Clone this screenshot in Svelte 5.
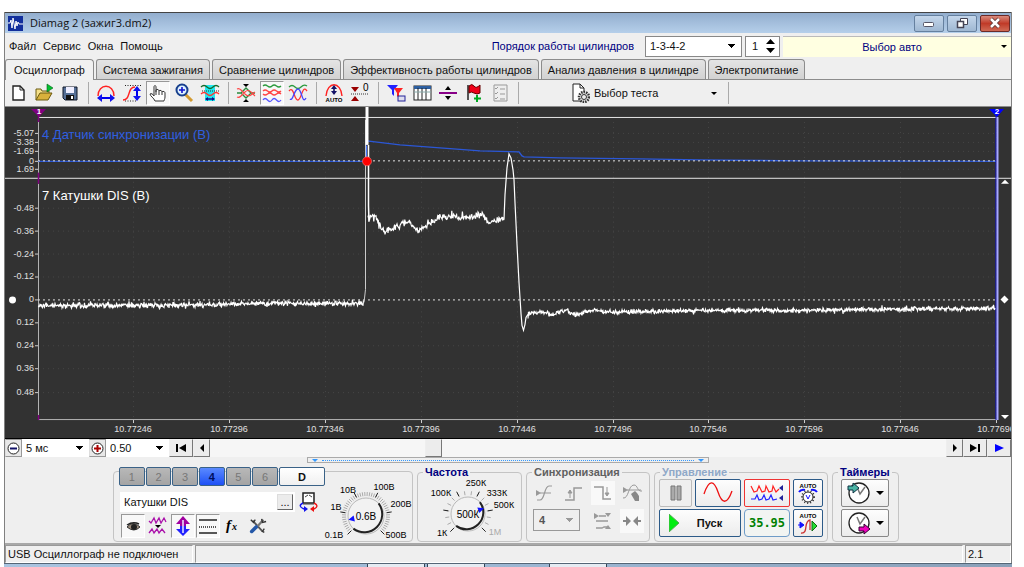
<script>
  // Oscilloscope main window: menu, mode tabs, toolbar, plot and the device panel.
  const tabs = ['Осциллограф', 'Система зажигания', 'Сравнение цилиндров', 'Эффективность работы цилиндров', 'Анализ давления в цилиндре', 'Электропитание'];
  let tab = $state(0);
  let channel = $state(4);
  let position = $state(299);
  let channelName = $state('Катушки DIS');

  const icons = {
    new: '<path d="M5 3h7l4 4v10H5z" fill="#fff" stroke="#222" stroke-width="1.4"/><path d="M12 3v4h4" fill="none" stroke="#222"/>',
    open: '<path d="M2 17V6h5l1 2h7v3" fill="#f5e08a" stroke="#6b5a10"/><path d="M2 17l4-7h12l-4 7z" fill="#d8b13c" stroke="#6b5a10"/><path d="M13 1l6 4-6 4z" fill="#00c030" stroke="#086018" stroke-width=".6"/>',
    save: '<path d="M3 4h14v13H5l-2-2z" fill="#556f96" stroke="#101828"/><path d="M6 4h8v6H6z" fill="#eef"/><path d="M6 12h8v5H6z" fill="#111"/><path d="M11 13h2v3h-2z" fill="#fff"/>',
    width: '<path d="M2 13C2 0 18 0 18 13" fill="none" stroke="#f22" stroke-width="1.4"/><path d="M5 15h10" stroke="#00e" stroke-width="2"/><path d="M1 15l5-4v8zM19 15l-5-4v8z" fill="#11e"/>',
    height: '<path d="M3 2.500h17M3 18h12" stroke="#222" stroke-dasharray="1 1.500"/><path d="M1 17c8 0 4-13 12-13" fill="none" stroke="#f22" stroke-width="1.400"/><path d="M15 6v9" stroke="#00e" stroke-width="2"/><path d="M15 3l4 5h-8zM15 18l4-5h-8z" fill="#11e"/>',
    hand: '<path d="M7 18c-1-3-5-5-5-7 1-1 3 0 4 2V4c0-2 2-2 2 0v5-2c0-1 3-1 3 1 0-1 3-1 3 1 0-1 3-1 3 1v4c0 2-1 3-1 4z" fill="#fff" stroke="#333"/><path d="M8 9v3M11 8v4M14 9v3" stroke="#333"/>',
    zoom: '<path d="M11 11l7 7" stroke="#d39a30" stroke-width="3"/><circle cx="8" cy="7" r="5.500" fill="#dff2ff" stroke="#173f8c" stroke-width="2"/><path d="M8 4v6M5 7h6" stroke="#11c" stroke-width="1.600"/>',
    cut: '<path d="M5 2h10v16H5z" fill="#1ee8f0"/><path d="M1 4q3-3 6 0t6 0 6 0" fill="none" stroke="#186a28" stroke-width="1.300"/><path d="M2 8h17" stroke="#333" stroke-dasharray="1 1"/><path d="M1 11q3-3 6 0t6 0 6 0" fill="none" stroke="#f33" stroke-width="1.300"/><path d="M6 16h8" stroke="#118" stroke-width="1.500"/><path d="M5 16l3-2v4zM15 16l-3-2v4z" fill="#118"/>',
    meet: '<path d="M7 1h6l-3 3zM7 19h6l-3-3z"/><path d="M1 10h4l5-5 5 5h4M5 10l5 5 5-5" fill="none" stroke="#2a8a3c" stroke-width="1.300"/><path d="M1 6q2-1 4 1l4 4q3 3 6 1l4-3M1 14q2 1 4-1l4-4q3-3 6 0l4 4" fill="none" stroke="#f44" stroke-width="1.100"/>',
    waves: '<g fill="none" stroke-width="1.300"><path d="M1 3q2-2 4.500 0t4.500 0 4.500 0 4.500 0" stroke="#2a9a3c"/><path d="M1 8q2-2 4.500 0t4.500 0 4.500 0 4.500 0M1 11q2 2 4.500 0t4.500 0 4.500 0 4.500 0" stroke="#f44"/><path d="M1 17q2-3 4.500 0t4.500 0 4.500 0 4.500 0" stroke="#55f"/></g>',
    cross: '<g fill="none" stroke-width="1.300"><path d="M1 4q3-3 6 0t6 0 6-1" stroke="#2a9a3c"/><path d="M1 8c5-6 5 10 9 9s4-16 9-9" stroke="#f33"/><path d="M2 16c3 3 4-10 8-10s4 16 8 9" stroke="#44f"/></g>',
    auto: '<path d="M2 13C3-2 17-2 18 13" fill="none" stroke="#f22" stroke-width="1.400"/><path d="M10 5v5" stroke="#116" stroke-width="1.600"/><path d="M10 2l3 4H7zM10 12l3-4H7z" fill="#116"/><text x="10" y="19" text-anchor="middle" font-size="6" font-weight="700">AUTO</text>',
    zero: '<path d="M1 11h18" stroke="#333" stroke-dasharray="1 1"/><path d="M5 9L1 4h8zM5 13l-4 5h8z" fill="#900"/><text x="13" y="8" font-size="10">0</text>',
    filter: '<path d="M1 2h11L8 7v6L6 11V7z" fill="#22f"/><path d="M8 5h9l-4 5v5l-2-2v-3z" fill="#f22"/><rect x="12" y="13" width="7" height="5" fill="#dde" stroke="#229"/>',
    table: '<rect x="2" y="3" width="17" height="14" fill="#fff" stroke="#222"/><path d="M2 3h17v3H2z" fill="#2d5fa0"/><path d="M6 5v12M10 5v12M14 5v12" stroke="#222"/><path d="M2 9h17" stroke="#8aa"/>',
    split: '<path d="M10 3l3 4H7zM10 17l3-4H7z"/><path d="M1 10h18" stroke="#808" stroke-width="2"/>',
    flag: '<path d="M4 2v15" stroke="#222" stroke-width="1.500"/><path d="M5 3q3-3 5 0t6-1v8q-3 2-6 0t-5 0z" fill="#f00018" stroke="#600"/><path d="M13 12v7M10 15.500h7" stroke="#0a2" stroke-width="2"/>',
    list: '<path d="M4 2h13v16H4z" fill="#eee" stroke="#999"/><path d="M5 5l1 1 2-2M5 10l1 1 2-2M5 15l1 1 2-2M10 6h5M10 11h5M10 16h5" fill="none" stroke="#999"/>',
    test: '<path d="M3 1h7l4 4v13H3z" fill="#fff" stroke="#222"/><path d="M10 1v4h4" fill="none" stroke="#222"/><circle cx="14" cy="14" r="5" fill="#ddd" stroke="#333" stroke-width="2.500" stroke-dasharray="1.500 1"/><circle cx="14" cy="14" r="2.500" fill="#eee" stroke="#333"/>',
    eye: '<path d="M4 11q6-7 13 0-6 6-13 0z" fill="#9a8a7a" stroke="#333"/><circle cx="11" cy="11" r="3" fill="#222"/><path d="M4 9q6-4 12-1" fill="none" stroke="#222" stroke-width="1.500"/>',
    squeeze: '<path d="M1 5l2 2 3-5 2 5 3-5 2 5 3-5 2 4M1 17l3-4 2 4 3-4 2 4 3-4 3 4" fill="none" stroke="#a1a" stroke-width="1.300"/><path d="M7 9h6l-3 3z"/>',
    updown: '<path d="M10 0l7 8h-4v3H7V8H3z" fill="#a000a0"/><path d="M10 20l7-7h-4v-3H7v3H3z" fill="#2222ff"/><path d="M10 4v13" stroke="#eef" stroke-width="1.500"/>',
    lines: '<path d="M1 4h18M1 17h18" stroke="#222" stroke-width="1.300"/><path d="M1 11h18" stroke="#222" stroke-dasharray="1 1" stroke-width="1.300"/>',
    fx: '<text x="3" y="14" font-family="Liberation Serif, serif" font-size="15" font-style="italic" font-weight="700">f</text><text x="9" y="14" font-family="Liberation Serif, serif" font-size="10" font-style="italic" font-weight="700">x</text>',
    tools: '<path d="M4 4l11 12" stroke="#555" stroke-width="2"/><path d="M16 3L8 12" stroke="#777" stroke-width="2.500"/><path d="M8 11l-5 5" stroke="#2458a8" stroke-width="4" stroke-linecap="round"/><path d="M2 3l3 3 2-3M17 13l-2 3 2 1M14 2l1 4 4-1" fill="none" stroke="#333" stroke-width="1.500"/>',
    swap: '<path d="M4 1h11v10H4z" fill="#fff" stroke="#222" stroke-width="1.500"/><path d="M6 5l3-2M10 3l3 2M4 12h11" stroke="#444"/><path d="M4 11q-6 3 1 6" fill="none" stroke="#11e" stroke-width="1.400"/><path d="M5 14l4 3-4 3z" fill="#11e"/><path d="M15 11q6 3 0 6" fill="none" stroke="#e11" stroke-width="1.400"/><path d="M15 14l-4 3 4 3z" fill="#e11"/>',
    trigA: '<path d="M1 7l5 3-5 3z" fill="#999"/><path d="M2 17h3c5 0 4-14 9-14h3M5 10h11" fill="none" stroke="#999" stroke-width="1.200"/>',
    trigUp: '<path d="M1 17h9V5h8" fill="none" stroke="#999" stroke-width="1.500"/><path d="M6 15V7M4 10l2-3 2 3z" fill="#999" stroke="#999"/>',
    trigDown: '<path d="M1 4h9v12h8" fill="none" stroke="#999" stroke-width="1.500"/><path d="M14 4v8M12 10l2 3 2-3z" fill="#999" stroke="#999"/>',
    trigHand: '<path d="M1 4l5 3-5 3z" fill="#999"/><path d="M1 15c6 1 5-13 11-13 4 0 3 7 8 6M5 7h14" fill="none" stroke="#999"/><path d="M9 11l4-3 2 2 2 3v5h-4z" fill="#888"/>',
    level: '<path d="M1 2l5 3-5 3z" fill="#999"/><path d="M6 5h7M3 10h12M3 17h6l2-1h5" stroke="#999" fill="none" stroke-width="1.300"/><path d="M12 2h6l-3 4zM12 18h6l-3-4z" fill="#999"/>',
    pinch: '<path d="M1 10h5M19 10h-5" stroke="#888" stroke-width="2"/><path d="M4 5l5 5-5 5zM16 5l-5 5 5 5z" fill="#888"/>',
  };

  const groups = [
    [['new', 'Новый'], ['open', 'Открыть'], ['save', 'Сохранить']],
    [['width', 'Масштаб по времени'], ['height', 'Масштаб по амплитуде'], ['hand', 'Перемещение', true], ['zoom', 'Лупа'], ['cut', 'Фрагмент']],
    [['meet', 'Свести'], ['waves', 'Разнести', true], ['cross', 'Наложить']],
    [['auto', 'Авто'], ['zero', 'Ноль']],
    [['filter', 'Фильтр'], ['table', 'Таблица'], ['split', 'Разделить'], ['flag', 'Добавить метку'], ['list', 'Отчёт']],
  ];

  // plot space
  const V = { x: 5, y: 107, w: 1006, h: 332 };
  const px = (x) => ((x - V.x) / V.w) * 100 + '%';
  const py = (y) => ((y - V.y) / V.h) * 100 + '%';
  const top = [['-5.07', 133], ['-3.38', 142], ['-1.69', 151], ['0', 161], ['1.69', 169]];
  const main = [['-0.48', 208], ['-0.36', 231], ['-0.24', 254], ['-0.12', 277], ['0', 300], ['0.12', 323], ['0.24', 346], ['0.36', 369], ['0.48', 393]];
  const times = ['10.77246', '10.77296', '10.77346', '10.77396', '10.77446', '10.77496', '10.77546', '10.77596', '10.77646', '10.77696'].map((t, i) => [t, 133 + Math.round(i * 95.9)]);

  let seed = 7;
  const rnd = () => (seed = (seed * 16807) % 2147483647) / 2147483647;
  // samples a polyline and adds noise, with a rare taller spike
  function noisy(pts, amp, step = 1) {
    const out = [];
    for (let i = 0; i < pts.length - 1; i++) {
      const [x0, y0] = pts[i], [x1, y1] = pts[i + 1];
      for (let x = x0; x < x1; x += step) {
        const y = y0 + ((y1 - y0) * (x - x0)) / (x1 - x0);
        const k = rnd() > 0.9 ? 1.7 : 1;
        out.push(x.toFixed(1) + ',' + (y + (rnd() + rnd() - 1) * amp * k).toFixed(1));
      }
    }
    return out.join(' ');
  }
  const idle = noisy([[38, 306], [110, 306], [180, 306], [260, 304], [364, 304]], 2.8, 0.5);
  const burn = noisy([[368, 217], [372, 219], [376, 218], [379, 224], [382, 231], [385, 233], [388, 230], [394, 227], [400, 226], [407, 222], [413, 226], [418, 232], [422, 229], [428, 225], [434, 222], [438, 216], [450, 217], [457, 215], [460, 219], [467, 218], [475, 217], [483, 215], [487, 222], [493, 222], [500, 219], [504, 218]], 4.2, 0.6);
  const tail = noisy([[528, 315], [535, 313], [545, 313], [552, 316], [560, 312], [567, 311], [577, 316], [586, 312], [595, 311], [610, 313], [650, 312], [700, 311], [800, 311], [880, 310], [950, 309], [996, 309]], 2.6, 0.5);
  const sync = '38,161.5 366,161.5 366,141 375,142 400,145 440,148 480,151 519,152 522,156 524,157 560,158 640,159 700,160 800,161 996,161.5';

  // tick ring of a knob
  function ring(cx, cy, r0, r1, n, from = -225, to = 45) {
    return Array.from({ length: n }, (_, i) => {
      const a = ((from + ((to - from) * i) / (n - 1)) * Math.PI) / 180;
      return [cx + r0 * Math.cos(a), cy + r0 * Math.sin(a), cx + r1 * Math.cos(a), cy + r1 * Math.sin(a)];
    });
  }
  const volts = [['0.1В', 9, 71], ['1В', 11, 43], ['10В', 23, 26], ['100В', 59, 23], ['200В', 76, 40], ['500В', 71, 71]];
  const rates = [['100К', 19, 31], ['250К', 54, 21], ['333К', 75, 31], ['500К', 82, 43], ['1К', 20, 71], ['1М', 73, 70]];
</script>

{#snippet icon(name, size = 20)}
  <svg width={size} height={size} viewBox="0 0 20 20" aria-hidden="true">{@html icons[name]}</svg>
{/snippet}

{#snippet knob(cx, cy, r, n, value, labels, w, angle)}
  <svg class="knob" width={w} height="76" viewBox="0 0 {w} 76" role="img" aria-label={value}>
    {#each ring(cx, cy, r + 2, r + 6, n) as [x1, y1, x2, y2]}<line {x1} {y1} {x2} {y2} stroke="#aaa" />{/each}
    {#each ring(cx, cy, r + 3, r + 8, 6) as [x1, y1, x2, y2]}<line {x1} {y1} {x2} {y2} stroke="#222" />{/each}
    <circle {cx} {cy} {r} fill="#f2f2f2" stroke="#b8b8b8" />
    <path d="M{cx + r * 0.7} {cy - r * 0.7}A{r} {r} 0 0 1 {cx - r * 0.7} {cy + r * 0.7}" fill="none" stroke="#222" stroke-width="2" />
    <path d="M{cx + r} {cy}l-6-3v6z" fill="#11f" transform="rotate({angle} {cx} {cy})" />
    <text x={cx} y={cy + 4} class="kv">{value}</text>
    {#each labels as [t, x, y]}<text {x} {y} class="kl" class:dim={t === '1М'}>{t}</text>{/each}
  </svg>
{/snippet}

<div class="page">
  <div class="win">
    <header class="title">
      <svg width="15" height="15" viewBox="0 0 15 15" aria-hidden="true"><rect width="15" height="15" fill="#122f9c" /><path d="M0 7h2l1-3 1 8 1-10 2 11 1-8 1 5 1-4 1 2h4" fill="none" stroke="#fff" /></svg>
      <span class="cap">Diamag 2 (зажиг3.dm2)</span>
      <button class="wb" aria-label="Свернуть"><svg width="14" height="12" viewBox="0 0 14 12"><rect x="1.500" y="5.500" width="10" height="4" rx="1" fill="#fff" stroke="#556" /></svg></button>
      <button class="wb" aria-label="Развернуть"><svg width="14" height="12" viewBox="0 0 14 12"><path d="M5.500 1.500h7v6h-7z" fill="#fff" stroke="#445" /><path d="M2.500 4.500h6v6h-6z" fill="#fff" stroke="#445" stroke-width="1.500" /></svg></button>
      <button class="wb close" aria-label="Закрыть"><svg width="14" height="12" viewBox="0 0 14 12"><path d="M3 2l8 8M11 2l-8 8" stroke="#533" stroke-width="4" /><path d="M3 2l8 8M11 2l-8 8" stroke="#fff" stroke-width="2.500" /></svg></button>
    </header>

    <div class="menu">
      <nav>
        {#each ['Файл', 'Сервис', 'Окна', 'Помощь'] as m}<a href="#menu">{m}</a>{/each}
      </nav>
      <label for="order">Порядок работы цилиндров</label>
      <select id="order" class="order"><option>1-3-4-2</option></select>
      <span class="spin"><input aria-label="Цилиндр" value="1" /><svg width="9" height="14" viewBox="0 0 9 14"><path d="M4.500 0L9 5H0zM4.500 14L9 9H0z" /></svg></span>
      <button class="car"><span>Выбор авто</span><i class="dn"></i></button>
    </div>

    <div class="tabs" role="tablist">
      {#each tabs as t, i}
        <button role="tab" aria-selected={tab === i} class:on={tab === i} onclick={() => (tab = i)}>{t}</button>
      {/each}
    </div>

    <div class="bar">
      {#each groups as g}
        {#each g as [name, label, on]}
          <button class="tb" class:on aria-label={label} title={label}>{@render icon(name)}</button>
        {/each}
        <i class="sep"></i>
      {/each}
      <button class="test">{@render icon('test')}<span>Выбор теста</span><i class="dn"></i></button>
      <i class="sep"></i>
    </div>

    <div class="scope">
      <svg class="plot" viewBox="{V.x} {V.y} {V.w} {V.h}" preserveAspectRatio="none" aria-hidden="true">
        <g stroke="#464646" stroke-dasharray="1 4">
          {#each times as [, x]}<path d="M{x + 0.5} 122V420" />{/each}
          {#each [...top, ...main] as [, y]}<path d="M38 {y + 0.5}H996" />{/each}
        </g>
        <path d="M38 117.5H996M5 178.500H1011" stroke="#e6e6e6" />
        <path d="M38 420.500H996M38.500 122V173M38.500 184V420" stroke="#b4b4b4" />
        <g stroke="#d0d0d0">
          {#each [...top, ...main] as [, y]}<path d="M35 {y + 0.5}H38" />{/each}
          {#each times as [, x]}<path d="M{x + 0.5} 421V424" />{/each}
        </g>
        <polyline points={sync} fill="none" stroke="#2b57d6" stroke-width="1.400" />
        <path d="M38 161H996M38 300.500H996" stroke="#ddd" stroke-dasharray="2 3" />
        <g fill="none" stroke="#fff" stroke-width="1.200">
          <polyline points={idle} />
          <path d="M364 303L365.500 290V120" stroke="#ccc" stroke-width="1" />
          <path d="M367 107V145" stroke-width="3" />
          <path d="M366.500 146V158" stroke="#4a78ff" />
          <path d="M368.500 145V206L369 222" stroke-width="1.500" />
          <polyline points={burn} />
          <path d="M504 220L505 195 507 168 509 154 511 158 513 170 514 180 515 203 517 245 519 283 521 314 522 326 523.500 331 525 325 526 318 528 315" />
          <polyline points={tail} />
        </g>
        <path d="M38.500 115V122M38.500 173V184M38.500 416V421" stroke="#800080" stroke-width="1.500" />
        <path d="M31 109h15l-7 8z" fill="#800080" />
        <path d="M996 115V421" stroke="#1010d0" /><path d="M997.500 117V421" stroke="#a8a8ff" stroke-width="2" />
        <path d="M989 109h15l-7 8z" fill="#00f" />
        <path d="M1001 184l4-4 4 4zM1001 416l4 4 4-4zM1004.500 296l4 4-4 4-4-4z" fill="#fff" />
        <circle cx="12.500" cy="300.500" r="3.500" fill="#fff" />
        <circle cx="367" cy="161.500" r="4.500" fill="#f00" stroke="#ff8080" stroke-width=".6" />
      </svg>
      {#each [...top, ...main] as [t, y]}<span class="yl" style:top={py(y)} style:right={px(V.x * 2 + V.w - 34)}>{t}</span>{/each}
      {#each times as [t, x]}<span class="xl" style:left={px(x)} style:top={py(430)}>{t}</span>{/each}
      <span class="mk" style:left={px(39)}>1</span>
      <span class="mk" style:left={px(997)}>2</span>
      <span class="ch sync" style:left={px(42)} style:top={py(135)}>4 Датчик синхронизации (В)</span>
      <span class="ch" style:left={px(42)} style:top={py(196)}>7 Катушки DIS (В)</span>
    </div>

    <div class="scroll">
      <button class="rb" aria-label="Уменьшить"><svg width="13" height="13" viewBox="0 0 13 13"><circle cx="6.500" cy="6.500" r="5.500" fill="#fff" stroke="#222" /><path d="M3 6.500h7" stroke="#116" stroke-width="2" /></svg></button>
      <select class="span" aria-label="Развёртка"><option>5 мс</option></select>
      <button class="rb" aria-label="Увеличить"><svg width="13" height="13" viewBox="0 0 13 13"><circle cx="6.500" cy="6.500" r="5.500" fill="#fff" stroke="#222" /><path d="M3 6.500h7M6.500 3v7" stroke="#a00" stroke-width="2" /></svg></button>
      <select class="gain" aria-label="Масштаб"><option>0.50</option></select>
      <button class="nb wide" aria-label="В начало"><svg width="12" height="8" viewBox="0 0 12 8"><path d="M1 0h2v8H1zM11 0v8L4 4z" /></svg></button>
      <button class="nb" aria-label="Назад"><svg width="6" height="8" viewBox="0 0 6 8"><path d="M5 0v8L1 4z" /></svg></button>
      <input type="range" min="0" max="1000" bind:value={position} aria-label="Позиция" />
      <button class="nb" aria-label="Вперёд"><svg width="6" height="8" viewBox="0 0 6 8"><path d="M1 0v8l4-4z" /></svg></button>
      <button class="nb wide" aria-label="В конец"><svg width="12" height="8" viewBox="0 0 12 8"><path d="M9 0h2v8H9zM1 0v8l7-4z" /></svg></button>
      <button class="nb wide" aria-label="Воспроизвести"><svg width="9" height="8" viewBox="0 0 9 8"><path d="M0 0v8l9-4z" fill="#00f" /></svg></button>
    </div>

    <div class="panel">
      <div class="splitter"><i></i><b></b><i></i></div>
      <div class="groups">
        <div class="box">
          <div class="left">
            <div class="nums">
              {#each [1, 2, 3, 4, 5, 6] as n}<button class:on={channel === n} onclick={() => (channel = n)}>{n}</button>{/each}
              <button class="d">D</button>
            </div>
            <div class="name">
              <div class="field"><input aria-label="Имя канала" bind:value={channelName} /><button aria-label="Выбрать">...</button></div>
              <button class="flat" aria-label="Поменять">{@render icon('swap')}</button>
            </div>
            <div class="tools">
              <button class="tb on" aria-label="Показать">{@render icon('eye')}</button>
              <button class="tb" aria-label="Сжать">{@render icon('squeeze')}</button>
              <button class="tb on" aria-label="Сдвиг">{@render icon('updown')}</button>
              <button class="tb on" aria-label="Линии">{@render icon('lines')}</button>
              <button class="tb" aria-label="Функция">{@render icon('fx')}</button>
              <button class="tb" aria-label="Настройки">{@render icon('tools', 18)}</button>
            </div>
          </div>
          {@render knob(41, 49, 18, 46, '0.6В', volts, 88, 168)}
        </div>

        <fieldset class="freq">
          <legend>Частота</legend>
          {@render knob(46, 49, 17, 16, '500К', rates, 96, -20)}
        </fieldset>

        <fieldset>
          <legend class="grey">Синхронизация</legend>
          <div class="syn">
            <button class="flat" aria-label="По уровню" disabled>{@render icon('trigA')}</button>
            <button class="flat" aria-label="По фронту" disabled>{@render icon('trigUp')}</button>
            <button class="flat lit" aria-label="По спаду" disabled>{@render icon('trigDown')}</button>
            <button class="flat" aria-label="Вручную" disabled>{@render icon('trigHand')}</button>
            <select aria-label="Канал синхронизации" disabled><option>4</option></select>
            <button class="flat" aria-label="Уровень" disabled>{@render icon('level')}</button>
            <button class="flat lit" aria-label="Совместить" disabled>{@render icon('pinch')}</button>
          </div>
        </fieldset>

        <fieldset>
          <legend class="pale">Управление</legend>
          <div class="ctl">
            <button class="off" aria-label="Пауза"><svg width="14" height="18" viewBox="0 0 14 18"><path d="M2 2h4v14H2zM8 2h4v14H8z" fill="#aaa" stroke="#777" /></svg></button>
            <button aria-label="Осциллограмма"><svg width="32" height="22" viewBox="0 0 32 22"><path d="M2 12C7-3 12-2 16 10s9 13 14-1" fill="none" stroke="#e11" stroke-width="1.300" /></svg></button>
            <button class="red" aria-label="Каналы"><svg width="34" height="20" viewBox="0 0 34 20"><path d="M1 3l3 6 3-1 2-5 3 6 3-1 1-5 3 6 3-1 1-5 3 6 3-3" fill="none" stroke="#f22" stroke-width="1.200" /><path d="M1 16h4l2-4 2 5 3-1 2-4 2 5 3-1 2-4 2 5 4-1" fill="none" stroke="#22f" stroke-width="1.200" /><path d="M33 2v6l-4-3zM33 12v6l-4-3z" fill="#229" /></svg></button>
            <button aria-label="Авто синхронизация"><svg width="22" height="24" viewBox="0 0 22 24"><text x="11" y="7" class="au">AUTO</text><path d="M2 11q2-3 6-2M20 11q-2-3-6-2" fill="none" stroke="#11f" stroke-width="2" /><circle cx="11" cy="16" r="6" fill="none" stroke="#333" stroke-width="2" stroke-dasharray="1 2" /><circle cx="11" cy="16" r="5" fill="#fff" stroke="#222" /><path d="M9 14l2 4 2-4" fill="none" stroke="#11f" /></svg></button>
            <button class="run"><svg width="10" height="18" viewBox="0 0 10 18"><path d="M0 0v18l10-9z" fill="#0e1" stroke="#5a5" /></svg><span>Пуск</span></button>
            <button class="val">35.95</button>
            <button aria-label="Авто запуск"><svg width="22" height="24" viewBox="0 0 22 24"><text x="11" y="7" class="au">AUTO</text><path d="M1 14h3M3 11l4 3-4 3z" fill="#11f" stroke="#11f" /><path d="M4 22c8 1 2-12 9-13v10" fill="none" stroke="#c33" stroke-width="1.300" /><path d="M15 10v10l5-5z" fill="#2d3" stroke="#161" /></svg></button>
          </div>
        </fieldset>

        <fieldset>
          <legend>Таймеры</legend>
          <div class="tim">
            <button aria-label="Таймер запуска"><svg width="24" height="24" viewBox="0 0 24 24"><circle cx="12" cy="12" r="10" fill="#fff" stroke="#222" stroke-width="1.300" /><path d="M10 6l3 7 5-7" fill="none" stroke="#777" stroke-width="1.500" /><path d="M1 5h5V2l6 5-6 5V9H1z" fill="#4bb5a5" stroke="#134" /></svg><i class="dn"></i></button>
            <button aria-label="Таймер остановки"><svg width="24" height="24" viewBox="0 0 24 24"><circle cx="12" cy="12" r="10" fill="#fff" stroke="#222" stroke-width="1.300" /><path d="M10 6l3 7 5-7" fill="none" stroke="#777" stroke-width="1.500" /><path d="M12 16h5v-3l6 5-6 5v-3h-5z" fill="#e0b" stroke="#303" /></svg><i class="dn"></i></button>
          </div>
        </fieldset>
      </div>
    </div>

    <footer class="status">
      <span class="s1">USB Осциллограф не подключен</span>
      <span class="s2"></span>
      <span class="s3">2.1</span>
    </footer>
  </div>
  <div class="task"><i></i><i></i><i class="gap"></i></div>
</div>

<style>
  :global(body) { background: #fff; }
  .page { min-height: 100vh; box-sizing: border-box; padding: 12px 12px 0 4px; display: flex; flex-direction: column; overflow: hidden;
    font: 11px/14px "Liberation Sans", Arial, sans-serif; color: #111; }
  .page :is(button, input, select) { font: inherit; color: inherit; box-sizing: border-box; margin: 0; }
  button { padding: 0; border: 0; background: none; }
  svg { display: block; flex: none; }
  .win { flex: 1; display: flex; flex-direction: column; background: #efefef; border: solid #808080; border-width: 0 1px; }
  .dn { border: 4px solid transparent; border-top-color: #000; border-bottom: 0; flex: none; }

  .title { height: 21px; box-sizing: border-box; border-top: 1px solid #444; background: linear-gradient(#93aece, #b5cfea);
    display: flex; align-items: center; gap: 3px; padding: 0 1px 0 3px; }
  .cap { flex: 1; padding-left: 4px; font: 11px/18px "Open Sans", "Noto Sans", sans-serif; }
  .wb { width: 30px; height: 17px; border: 1px solid #65809f; border-radius: 2px; background: linear-gradient(#c4d6ea, #9fb8d3); display: grid; place-items: center; }
  .close { border-color: #6b2a28; background: linear-gradient(#d98a7c, #c03a28 50%, #cf6a55); }

  .menu { height: 26px; display: flex; align-items: center; }
  nav { flex: 1; display: flex; gap: 7px; padding-left: 4px; }
  nav a { color: #111; text-decoration: none; }
  .page .menu label { color: #000080; margin-right: 11px; }
  select { --tri: #000; appearance: none; padding: 0 4px; border: 1px solid #888; border-radius: 0; background-color: #fff; background-repeat: no-repeat;
    background-image: linear-gradient(to bottom right, var(--tri) 50%, transparent 0), linear-gradient(to bottom left, var(--tri) 50%, transparent 0);
    background-size: 4px 4px; background-position: right 5px center, right 9px center; }
  .order { width: 97px; height: 21px; }
  .spin { display: flex; align-items: center; width: 35px; height: 21px; box-sizing: border-box; border: 1px solid #888; background: #fff; margin: 0 3px; }
  .spin input { width: 20px; border: 0; padding: 0 0 0 6px; background: none; }
  .car { width: 228px; height: 21px; background: #ffffe1; border-top: 1px solid #bbb; display: flex; align-items: center; padding-right: 4px; }
  .car span { flex: 1; color: #000080; }
  .car .dn, .test .dn { border-width: 3px; border-bottom: 0; }

  .tabs { height: 20px; display: flex; gap: 2px; align-items: flex-end; }
  .tabs button { height: 20px; padding: 0 6px; border: 1px solid #8c8c8c; border-bottom: 0; border-radius: 3px 4px 0 0; background: linear-gradient(#e4e4e4, #d2d2d2); }
  .tabs .on { height: 21px; padding: 0 8px; background: #f1f1f1; margin-bottom: -1px; z-index: 1; }
  .bar { height: 28px; box-sizing: border-box; border: solid #8c8c8c; border-width: 1px 0; display: flex; align-items: center; gap: 2px; padding-left: 1px; }
  .tb { width: 24px; height: 24px; display: grid; place-items: center; border: 1px solid transparent; }
  .tb.on { background: #f8f8f8; border-color: #999 #fff #fff #999; }
  .sep { width: 8px; height: 22px; background: linear-gradient(#aaa, #aaa) no-repeat center / 1px 100%; }
  .test { width: 198px; height: 24px; display: flex; align-items: center; gap: 4px; padding: 0 5px 0 46px; }
  .test span { flex: 1; text-align: left; }

  .scope { position: relative; flex: 1; min-height: 240px; background: #323232; color: #e0e0e0; overflow: hidden; border-bottom: 1px solid #000; box-sizing: border-box; }
  .plot { position: absolute; inset: 0; width: 100%; height: 100%; }
  .yl, .xl, .mk, .ch { position: absolute; white-space: nowrap; }
  .yl, .xl { font-size: 9px; line-height: 10px; transform: translateY(-50%); }
  .xl { transform: translate(-50%, -50%); }
  .mk { top: 1px; font-size: 8px; line-height: 8px; font-weight: 700; color: #fff; transform: translateX(-50%); }
  .ch { font-size: 13px; line-height: 16px; color: #fff; transform: translateY(-50%); }
  .ch.sync { color: #2f5fe0; }

  .scroll { height: 18px; display: flex; background: #f7f7f7; }
  .scroll svg { margin: auto; }
  .rb { width: 17px; border: 1px solid #999; border-left-color: #ddd; background: #e8e8e8; }
  .scroll select { border: 0; }
  .span { width: 67px; }
  .gain { width: 63px; }
  .nb { width: 17px; background: #ececec; border: 1px solid; border-color: #eee #777 #777 #eee; }
  .wide { width: 24px; }
  .scroll input { appearance: none; flex: 1; min-width: 0; height: 18px; background: #f6f6f6; }
  .scroll input::-webkit-slider-thumb { appearance: none; width: 17px; height: 18px; background: #ececec; border: 1px solid; border-color: #eee #777 #777 #eee; box-sizing: border-box; }

  .panel { height: 88px; box-sizing: border-box; border-bottom: 2px solid #a8a8a8; }
  .splitter { width: 402px; max-width: 80%; height: 6px; box-sizing: border-box; margin: 0 auto; border: 1px solid #aaa; display: flex; align-items: center; gap: 4px; padding: 0 4px; }
  .splitter i { border: 3px solid transparent; border-top-color: #39f; border-bottom: 0; }
  .splitter b { flex: 1; border-top: 1px dotted #39f; }
  .groups { display: flex; justify-content: center; gap: 4px; height: 76px; margin-top: 3px; padding-right: 4px; }
  .box, fieldset { box-sizing: border-box; border: 1px solid #c4c4c4; border-radius: 4px; margin: 0; padding: 0 4px; min-width: 0; }
  .box { margin-top: 5px; padding: 0 0 0 5px; display: flex; width: 300px; }
  legend { font-size: 11px; line-height: 12px; font-weight: 700; color: #000080; padding: 0 2px; margin-left: 1px; }
  .grey { color: #606060; }
  .pale { color: #8fa8c8; }
  .left { width: 206px; }
  .nums { display: flex; gap: 1px; margin-top: -5px; }
  .nums button { width: 26px; height: 19px; border: 1px solid #3a6287; border-radius: 2px; background: linear-gradient(#b8b8b8, #a4a4a4); color: #777; }
  .nums button.on { background: linear-gradient(#5a8aff, #1e50f5); color: #001060; font-weight: 700; }
  .nums .d { width: 47px; background: linear-gradient(#fff, #f0f0f0); color: #111; font-weight: 700; }
  .name { display: flex; margin-top: 6px; gap: 4px; }
  .field { display: flex; align-items: center; width: 175px; height: 20px; background: #fff; margin-left: 1px; padding-right: 2px; box-sizing: border-box; }
  .field input { flex: 1; min-width: 0; border: 0; background: none; padding: 0 4px; }
  .field button { width: 16px; height: 16px; border: 1px solid; border-color: #ddd #666 #666 #ddd; background: #ececec; line-height: 8px; }
  .tools { display: flex; gap: 1px; margin: 2px 0 0 2px; }
  .knob { margin-top: -5px; overflow: visible; }
  .freq { width: 105px; }
  .freq .knob { margin-top: -13px; }
  .kv { font-size: 10px; text-anchor: middle; }
  .kl { font-size: 9px; text-anchor: middle; }
  .dim { fill: #aaa; }
  .flat { width: 24px; height: 24px; display: grid; place-items: center; }
  .name .flat { height: 20px; width: 20px; }
  .lit { background: #f9f9f9; }
  .syn { display: grid; grid-template-columns: repeat(4, 24px); gap: 4px 5px; padding: 3px 1px 0 2px; }
  .syn select { --tri: #999; grid-column: span 2; height: 22px; width: 47px; padding: 0 5px; border-color: #999; color: #555; font-weight: 700; opacity: 1; background-color: #efefef; }
  .ctl { display: grid; grid-template-columns: 33px 46px 46px 30px; grid-auto-rows: 28px; gap: 2px 3px; padding-top: 1px; }
  .ctl button, .tim button { border: 1px solid #2c5a88; border-radius: 2px; background: linear-gradient(#fdfdfd, #ececec); display: flex; align-items: center; justify-content: center; }
  .ctl .off { border-color: #bbb; background: #efefef; }
  .ctl .red { border-color: #e33; }
  .ctl .run { grid-column: span 2; font-weight: 700; justify-content: flex-start; padding-left: 9px; }
  .run span { flex: 1; }
  .ctl .val { color: #008000; font: 700 12px/14px "DejaVu Sans Mono", monospace; border-color: #6f9cc8; border-radius: 4px; background: #f2f4f2; }
  .au { font-size: 6px; font-weight: 700; text-anchor: middle; }
  .tim { display: grid; grid-auto-rows: 28px; gap: 2px; padding: 1px 5px 0 4px; }
  .tim button { width: 48px; gap: 5px; border-color: #888; }

  .status { height: 18px; display: flex; gap: 2px; }
  .status span { box-sizing: border-box; border: solid; border-width: 1px; border-color: #999 #fff #fff #999; padding: 0 2px; line-height: 16px; white-space: nowrap; }
  .s1 { width: 188px; }
  .s2 { flex: 1; }
  .s3 { width: 46px; }
  .task { height: 4px; background: linear-gradient(90deg, #a9c4e0, #9ab4d0 60%, #8aa0b8); display: flex; gap: 2px; padding-left: 363px; border-top: 1px solid #567; box-sizing: border-box; }
  .task i { width: 58px; background: #e6ecf3; border: solid #345; border-width: 0 1px; box-sizing: border-box; }
  .task .gap { margin-left: 62px; }
</style>
